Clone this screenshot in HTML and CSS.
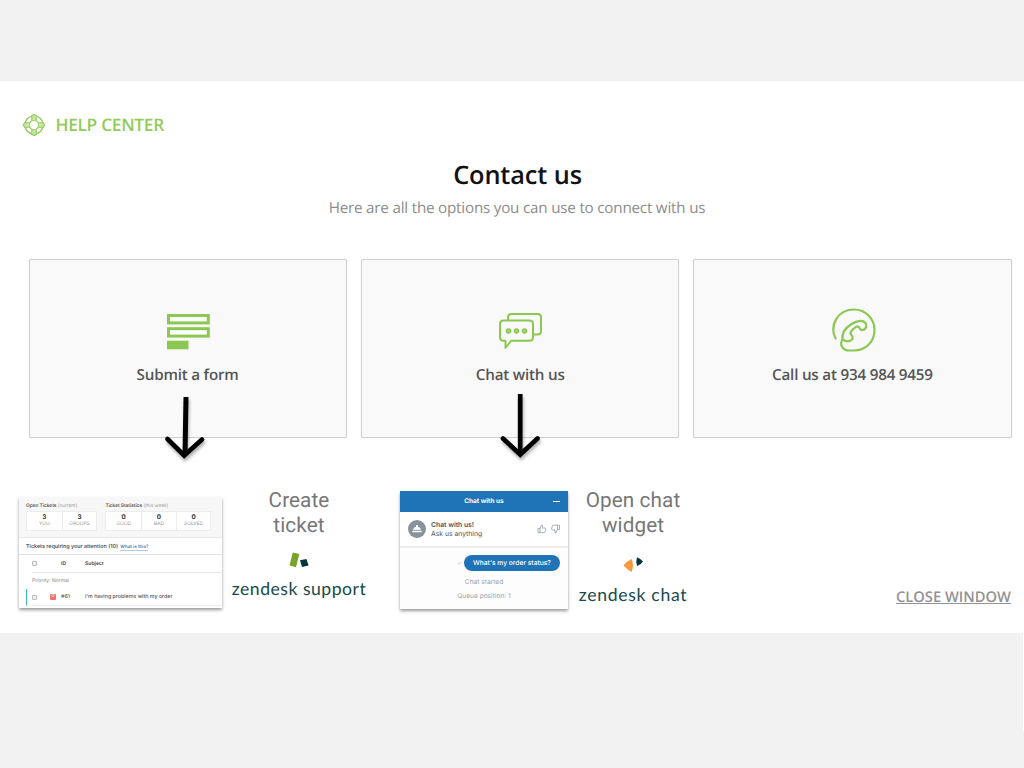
FILE: index.html
```html
<!DOCTYPE html>
<html lang="en">
<head>
<meta charset="utf-8">
<title>Help Center - Contact us</title>
<link rel="stylesheet" href="styles.css">
</head>
<body>
<main class="panel">
  <header class="brand">
    <svg class="brand-icon" viewBox="0 0 24 24" width="24" height="24" fill="none" stroke="currentColor">
      <circle cx="12" cy="12" r="9.1" stroke-width="1.4"/>
      <circle cx="12" cy="12" r="4.8" stroke-width="1.2"/>
      <path d="M9.800 7.300V2.500L12 1.400L14.200 2.500V7.300M9.800 16.700V21.500L12 22.600L14.200 21.500V16.700M7.300 9.800H2.500L1.400 12L2.500 14.200H7.300M16.700 9.800H21.500L22.600 12L21.500 14.200H16.700" stroke-width="1.1" fill="#c9e6aa"/>
    </svg>
    <span class="brand-name">HELP CENTER</span>
  </header>
  <h1 class="title">Contact us</h1>
  <p class="subtitle">Here are all the options you can use to connect with us</p>

  <section class="cards">
    <article class="card">
      <svg class="card-icon" viewBox="0 0 48 48" width="48" height="48">
        <rect x="4.500" y="10.500" width="39.800" height="7.400" fill="#fff" stroke="#8bc751" stroke-width="3"/>
        <rect x="4.500" y="23.700" width="39.800" height="7.400" fill="#fff" stroke="#8bc751" stroke-width="3"/>
        <rect x="3" y="35.700" width="21.500" height="8.600" fill="#8bc751"/>
      </svg>
      <span class="card-label form-label">Submit a form</span>
      <svg class="arrow form-arrow" viewBox="0 0 48 76" width="48" height="76">
        <path d="M26 4L25 62" stroke-width="5"/>
        <path d="M7.500 46L24.200 62.500L42 46.500" stroke-width="4.700" stroke-linecap="round"/>
      </svg>
    </article>
    <article class="card">
      <svg class="card-icon chat-icon" viewBox="0 0 48 48" width="48" height="48" fill="none" stroke="#8bc751" stroke-width="2" stroke-linejoin="round">
        <g transform="translate(0 1)">
          <path d="M11 14.500v-3q0-3.500 3.500-3.500h26q3.500 0 3.500 3.500v13.500q0 3.500-3.500 3.500H36"/>
          <path d="M6.500 14.500h26q3.500 0 3.500 3.500v13.300q0 3.500-3.500 3.500H14L8.500 42v-7.200h-2q-3.500 0-3.500-3.500V18q0-3.500 3.500-3.500z"/>
          <g fill="#a8d67b" stroke-width="1.600"><circle cx="11.500" cy="25" r="2"/><circle cx="19.500" cy="25" r="2"/><circle cx="27.500" cy="25" r="2"/></g>
        </g>
      </svg>
      <span class="card-label">Chat with us</span>
      <svg class="arrow" viewBox="0 0 48 76" width="48" height="76">
        <path d="M24.200 2V61" stroke-width="4.700"/>
        <path d="M7 46.500L24.200 62.500L41.500 46.500" stroke-width="4.700" stroke-linecap="round"/>
      </svg>
    </article>
    <article class="card">
      <svg class="card-icon call-icon" viewBox="0 0 48 48" width="48" height="48" fill="none" stroke="#8bc751" stroke-width="2.200" stroke-linecap="round" stroke-linejoin="round">
        <path d="M5.600 33.500C-1 20 8 4.500 24 4.500C35.500 4.500 44.500 13.500 44.500 25C44.500 37 35.500 45.500 24 45.500H19.500C13 45.500 9 40 12.500 34.500"/>
        <path d="M12.500 34.500C15 36 19 37 21.500 35C24.500 32.500 21.500 30.500 20.500 28.500C20 26.500 26 21 28 21.500C30.500 22.500 29.500 26 33 25C36.500 24 37 20 35.500 18C32.500 14.500 26 16 21.500 19C16 22.500 11.500 28 12.500 34.500Z"/>
      </svg>
      <span class="card-label">Call us at 934 984 9459</span>
    </article>
  </section>

  <section class="flows">
    <div class="ticket">
      <div class="ticket-stats">
        <div class="stat-group">
          <div class="stat-title"><b>Open Tickets</b> (current)</div>
          <div class="stat-row"><div class="stat"><b>3</b>YOU</div><div class="stat"><b>3</b>GROUPS</div></div>
        </div>
        <div class="stat-group">
          <div class="stat-title"><b>Ticket Statistics</b> (this week)</div>
          <div class="stat-row"><div class="stat"><b>0</b>GOOD</div><div class="stat"><b>0</b>BAD</div><div class="stat"><b>0</b>SOLVED</div></div>
        </div>
      </div>
      <div class="ticket-heading">Tickets requiring your attention (10) <span class="what">What is this?</span></div>
      <div class="ticket-row head"><i class="check"></i><span></span><b>ID</b><b>Subject</b></div>
      <div class="ticket-priority">Priority: Normal</div>
      <div class="ticket-row item"><i class="check"></i><i class="tag">o</i><span>#61</span><span>I'm having problems with my order</span></div>
    </div>

    <div class="caption support">
      <div class="caption-text">Create<br>ticket</div>
      <svg class="mark" viewBox="0 0 22 18" width="22" height="18"><path d="M4.800 1.500L11.300 3L8 16.200L1.500 14.600Z" fill="#78a328"/><path d="M12 9.300L18.500 8L20.500 14.500L14 16Z" fill="#03363d"/></svg>
      <div class="wordmark">zendesk support</div>
    </div>

    <div class="chat">
      <div class="chat-bar"><span>Chat with us</span><i class="minimize"></i></div>
      <div class="chat-agent">
        <svg viewBox="0 0 18 18" width="18" height="18"><circle cx="9" cy="9" r="9" fill="#87929d"/><path d="M5 9.800Q5.500 7 8 6.700V5h2v1.700q2.500.3 3 3.100zM4.300 10.700h9.400v1.600H4.300z" fill="#fff"/></svg>
        <div class="agent-text"><b>Chat with us!</b><span>Ask us anything</span></div>
        <svg class="thumbs" viewBox="0 0 24 10" width="24" height="10" fill="none" stroke="#919ba4" stroke-width=".8" stroke-linejoin="round"><path d="M1 4.300h2v4.300H1zM3 4.600L4.600 1q1.200-.1 1 1.300L5.300 4H8q.8 0 .7.800L8 8q-.2.700-.9.700H3"/><path d="M22.500 5.500h-2V1.200h2zM20.500 5.200L18.800 8.900q-1.200.1-1-1.300L18 5.900h-2.700q-.8 0-.7-.8L15.300 1.900q.2-.7.900-.7h4.300"/></svg>
      </div>
      <div class="chat-body">
        <div class="message"><svg viewBox="0 0 5 4" width="5" height="4"><path d="M.5 2L2 3.300L4.500.5" fill="none" stroke="#b5bdc4" stroke-width=".7"/></svg><span class="bubble">What's my order status?</span></div>
        <div class="note">Chat started</div>
        <div class="note queue">Queue position: 1</div>
      </div>
    </div>

    <div class="caption chat-caption">
      <div class="caption-text">Open chat<br>widget</div>
      <svg class="mark" viewBox="0 0 22 18" width="22" height="18"><path d="M1.500 10.500Q5 6 9.500 4Q12.500 10 9.500 17Q5 14.500 1.500 10.500Z" fill="#f79a3e"/><path d="M15 2.200Q18.500 3.500 21 6.500Q19 9.500 15.200 11Q13.500 6.500 15 2.200Z" fill="#03363d"/></svg>
      <div class="wordmark">zendesk chat</div>
    </div>
    <a class="close">CLOSE WINDOW</a>
  </section>
</main>
<div class="edge"></div>
</body>
</html>
```
FILE: styles.css
```css
* { box-sizing: border-box; }
body { margin: 0; padding-top: 81px; height: 768px; overflow: hidden; background: #f2f2f2; font-family: "Open Sans", "Noto Sans", sans-serif; text-rendering: geometricPrecision; }
.panel { height: 552px; background: #fff; padding-top: 32px; display: flex; flex-direction: column; white-space: nowrap; }
.brand { display: flex; align-items: center; height: 24px; padding-left: 22px; gap: 9.500px; color: #91cb58; }
.brand-name { font-size: 17.300px; font-weight: 600; letter-spacing: -.300px; }
.title { margin: 20px 0 0 11px; height: 36px; line-height: 36px; text-align: center; font-size: 25.300px; font-weight: 600; letter-spacing: -.1px; color: #111; }
.subtitle { margin: 5px 0 0 10px; height: 20px; line-height: 20px; text-align: center; font-size: 15.200px; letter-spacing: -.200px; color: #8c8c8c; }

.cards { display: flex; gap: 14px; margin: 41px 12.500px 0 29px; }
.card { position: relative; flex: 1; height: 179px; padding-top: 45px; display: flex; flex-direction: column; align-items: center; border: 1px solid #d0d0d0; border-radius: 2px; background: #f9f9f9; box-shadow: 0 0 1px #ccc; }
.card-icon { flex: none; }
.chat-icon { margin-left: 2px; }
.call-icon { margin-left: 3px; }
.card-label { margin-top: 11px; line-height: 22px; font-size: 15.200px; font-weight: 600; letter-spacing: -.200px; color: #555; }
.form-label { margin-right: 1px; }
.arrow { position: absolute; left: 134px; top: 132px; fill: none; stroke: #000; filter: drop-shadow(1px 3px 1.500px rgba(0,0,0,.3)); }
.form-arrow { left: 130px; top: 133px; }

.flows { display: flex; align-items: flex-start; padding: 53px 12px 0 19px; }
.ticket { width: 203px; height: 111px; margin-top: 6px; overflow: hidden; background: #fff; font-family: Inter, sans-serif; font-size: 5px; color: #555; box-shadow: 0 2px 3px rgba(0,0,0,.4); }
.ticket-stats { display: flex; gap: 8px; height: 41px; padding: 5.500px 7px; background: #f7f7f7; border-bottom: 1px solid #e8e8e8; }
.stat-title { height: 8px; line-height: 6px; font-size: 4.800px; color: #999; letter-spacing: -.02px; }
.stat-title b { font-weight: 600; color: #555; }
.stat-row { display: flex; width: max-content; background: #fff; border: 1px solid #ececec; height: 20px; }
.stat { width: 34.700px; display: flex; flex-direction: column; align-items: center; padding-top: 2px; line-height: 7px; font-size: 4.900px; color: #999; border-left: 1px solid #ececec; }
.stat:first-child { border-left: 0; }
.stat b { font-size: 6.300px; color: #333; }
.ticket-heading { height: 17px; line-height: 18px; padding-left: 7px; font-size: 5.350px; font-weight: 600; border-bottom: 1px solid #e2e2e2; }
.what { margin-left: 1px; font-size: 4.600px; font-weight: 500; color: #2c6f9e; border-bottom: 1px solid #b5cee0; }
.ticket-row { display: grid; grid-template-columns: 15px 14px 24px 1fr; align-items: center; margin-left: 8px; padding-left: 5px; }
.head { height: 18px; margin-left: 13px; padding-left: 0; border-bottom: 1px solid #e6e6e6; }
.ticket-priority { height: 16px; line-height: 16px; margin-left: 13px; color: #888; }
.item { height: 17px; margin-left: 7px; border-left: 1.500px solid #35b5c5; font-size: 5.300px; font-weight: 500; border-bottom: 1px solid #eee; }
.check { width: 5px; height: 5px; border: 1px solid #bbb; border-radius: 1px; background: #f2f2f2; }
.tag { width: 6px; height: 6px; border-radius: 1px; background: #f17070; color: #fff; font: 5px/5px Inter, sans-serif; text-align: center; margin-left: 3px; }

.caption { display: flex; flex-direction: column; align-items: center; }
.support { width: 134px; margin-left: 10px; }
.caption-text { margin-top: -2px; font: 20.700px/25px Roboto, sans-serif; color: #777; text-align: center; letter-spacing: .1px; }
.mark { margin-top: 12px; }
.wordmark { font: 17.600px/22px Lato, sans-serif; letter-spacing: .5px; color: #17494d; }
.support .wordmark { margin-top: 9px; }

.chat { width: 168px; height: 117.500px; margin-left: 34px; background: #fdfdfd; font-family: Inter, sans-serif; font-size: 6.500px; color: #98a1a9; box-shadow: 0 2px 3px rgba(0,0,0,.4); }
.chat-bar { position: relative; height: 21px; line-height: 20px; background: #1f73b7; color: #fff; text-align: center; font-weight: 700; font-size: 6.500px; }
.minimize { position: absolute; right: 8px; top: 10px; width: 7px; height: 1px; background: #fff; }
.chat-agent { display: flex; align-items: center; height: 36px; padding: 0 7px 0 8px; background: #fff; border-bottom: 2px solid #eee; }
.agent-text { display: flex; flex-direction: column; margin-left: 5px; line-height: 9.500px; font-size: 6.800px; color: #49545c; }
.agent-text b { font-weight: 600; }
.thumbs { margin-left: auto; }
.message { display: flex; justify-content: flex-end; align-items: center; padding: 7px 8px 0; gap: 2px; }
.bubble { width: 96px; height: 16px; line-height: 16px; border-radius: 8px; background: #1f73b7; color: #fff; text-align: center; font-size: 6.700px; font-weight: 500; }
.note { margin-top: 6px; line-height: 10px; text-align: center; font-size: 6.600px; }
.queue { margin-top: 4px; }

.chat-caption { width: 110px; margin-left: 10px; }
.chat-caption .mark { margin-top: 16px; }
.chat-caption .wordmark { margin-top: 11px; letter-spacing: .7px; }
.close { margin-left: auto; margin-top: 96px; height: 20px; line-height: 20px; font-size: 14.700px; font-weight: 600; color: #929292; text-decoration: underline; margin-right: 1px; }
.edge { width: 1px; height: 98px; margin-left: auto; background: #fff; }
```
